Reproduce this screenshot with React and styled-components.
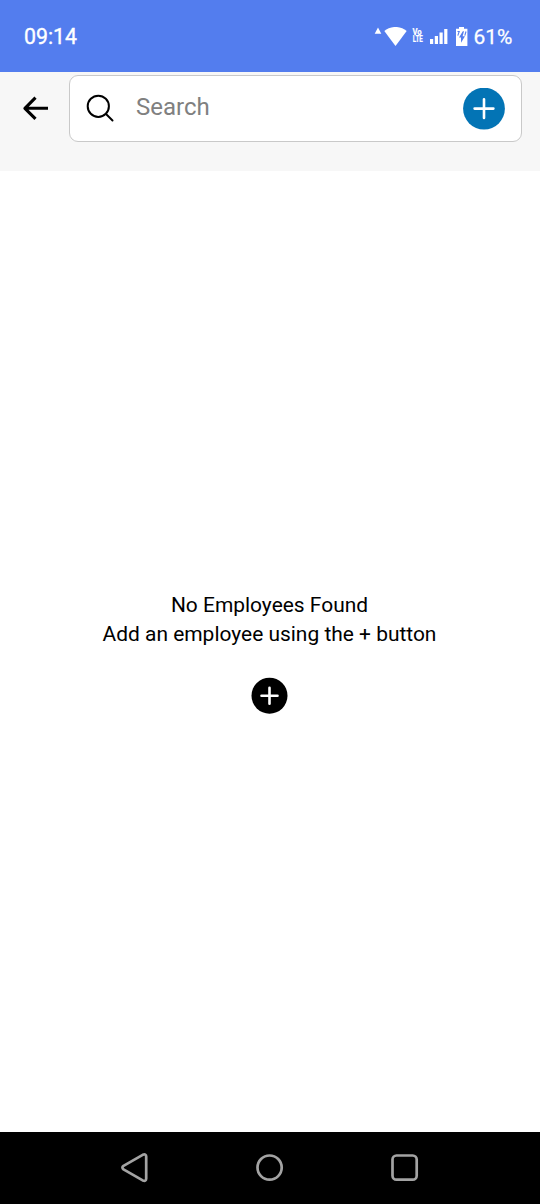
import React from "react";
import styled, { createGlobalStyle } from "styled-components";

const GlobalStyle = createGlobalStyle`
  * { box-sizing: border-box; }
  html, body { margin: 0; background: #fff; }
  body { font-family: Roboto, "Liberation Sans", sans-serif; }
  button { border: 0; padding: 0; background: none; font: inherit; color: inherit; }
  svg { display: block; flex: none; }
`;

const Screen = styled.div`
  width: 540px;
  height: 1204px;
  display: flex;
  flex-direction: column;
  overflow: hidden;
  background: #fff;
`;

const StatusBar = styled.header`
  flex: none;
  height: 72px;
  padding: 2px 27.5px 0 24px;
  display: flex;
  align-items: center;
  justify-content: space-between;
  background: #537dee;
  color: #fff;
`;

const StatusText = styled.span`
  font-size: ${(p) => p.$size || 21}px;
  line-height: 24px;
  font-weight: 400;
  -webkit-text-stroke: ${(p) => p.$stroke || 0}px currentColor;
`;

const StatusIcons = styled.div`
  display: flex;
  align-items: center;
`;

const Indicators = styled.div`
  display: flex;
  align-items: flex-start;
  height: 21px;
  margin-right: 5.5px;
`;

const Volte = styled.div`
  width: 11px;
  margin: 2px 7px 0 5px;
  display: flex;
  flex-direction: column;
  align-items: center;
  font-size: 8.4px;
  line-height: 7.5px;
  font-weight: 700;
  -webkit-text-stroke: 0.2px currentColor;
`;

const VolteLine = styled.span`
  transform: scaleX(${(p) => p.$scale});
`;

const Toolbar = styled.div`
  flex: none;
  height: 99px;
  padding: 3px 18px 0 22px;
  display: flex;
  align-items: flex-start;
  background: #f7f7f7;
`;

const BackButton = styled.button`
  width: 47px;
  height: 66px;
  display: flex;
  align-items: center;
`;

const SearchBox = styled.div`
  flex: 1;
  height: 67px;
  padding: 0 16px 0 16px;
  display: flex;
  align-items: center;
  border: 1.5px solid #c9c9c9;
  border-radius: 9px;
  background: #fff;
`;

const SearchLabel = styled.span`
  flex: 1;
  margin: -3px 0 0 21px;
  font-size: 24px;
  line-height: 28px;
  color: #808080;
`;

const AddButton = styled.button`
  display: block;
  color: ${(p) => p.$color};
`;

const Content = styled.main`
  flex: 1;
  display: flex;
  flex-direction: column;
  align-items: center;
  padding: 420px 1px 0 0;
`;

const Message = styled.p`
  margin: 0 0 28px;
  text-align: center;
  font-size: 20.95px;
  line-height: 29px;
  color: #000;
`;

const MessageLine = styled.span`
  display: block;
`;

const NavBar = styled.nav`
  flex: none;
  height: 72px;
  padding: 0 67px;
  display: grid;
  grid-template-columns: repeat(3, 1fr);
  background: #000;
  color: #a3a3a3;
`;

const NavButton = styled.button`
  display: flex;
  align-items: center;
  justify-content: center;
`;

const PlusDisc = ({ width, height, cx, cy, r, arm }) => (
  <svg width={width} height={height} viewBox={`0 0 ${width} ${height}`}>
    <circle cx={cx} cy={cy} r={r} fill="currentColor" />
    <path
      d={`M${cx} ${cy - arm}V${cy + arm}M${cx - arm} ${cy}H${cx + arm}`}
      fill="none"
      stroke="#fff"
      strokeWidth="2.6"
      strokeLinecap="round"
    />
  </svg>
);

const SignalIcons = () => (
  <Indicators>
    <svg width="33" height="20" viewBox="0 0 33 20" fill="currentColor">
      <path d="M4 .5L7.3 6.8H.7Z" />
      <path d="M10.3 4C16 -1.4 27 -1.4 32.7 4L21.5 19Z" />
    </svg>
    <Volte>
      <VolteLine $scale={0.92}>Vo</VolteLine>
      <VolteLine $scale={0.74}>LTE</VolteLine>
    </Volte>
    <svg width="18" height="20" viewBox="0 0 18 20" fill="currentColor">
      <path d="M0 12H3.2V17H0ZM4.8 9H8V17H4.8ZM9.5 5.5H12.7V17H9.5ZM14.2 2H17.4V17H14.2Z" />
    </svg>
    <svg width="20" height="20" viewBox="0 0 20 20">
      <path d="M8 1.8H11V0H16V1.8H19.4V19H8Z" fill="currentColor" />
      <path d="M9.5 4.5H11.2L9.8 8.6M18 4.5L16.8 8.6" fill="none" stroke="#537dee" strokeWidth="1.1" />
      <path d="M14.8 4.2L11 10.4H13V15.8L17 9.2H14.6L16 4.2Z" fill="#537dee" />
    </svg>
  </Indicators>
);

export default function App() {
  return (
    <>
      <GlobalStyle />
      <Screen>
        <StatusBar>
          <StatusText $size={21.3} $stroke={0.35}>09:14</StatusText>
          <StatusIcons>
            <SignalIcons />
            <StatusText $stroke={0.25}>61%</StatusText>
          </StatusIcons>
        </StatusBar>
        <Toolbar>
          <BackButton aria-label="Back">
            <svg width="27" height="26" viewBox="0 0 27 26" fill="none" stroke="currentColor" strokeWidth="3.1" strokeLinejoin="round">
              <path d="M26 13.3H3M13.5 2.7L2.9 13.3L13.5 23.9" />
            </svg>
          </BackButton>
          <SearchBox>
            <svg width="29" height="29" viewBox="0 0 29 29" fill="none" stroke="#000" strokeWidth="2" strokeLinecap="round">
              <circle cx="12.3" cy="12.3" r="10.6" />
              <path d="M20 20L26.5 26.5" />
            </svg>
            <SearchLabel>Search</SearchLabel>
            <AddButton $color="#0374b5" aria-label="Add employee">
              <PlusDisc width={42} height={42} cx={21} cy={20.6} r={20.9} arm={9.4} />
            </AddButton>
          </SearchBox>
        </Toolbar>
        <Content>
          <Message>
            <MessageLine>No Employees Found</MessageLine>
            <MessageLine>Add an employee using the + button</MessageLine>
          </Message>
          <AddButton $color="#000" aria-label="Add employee">
            <PlusDisc width={37} height={37} cx={18.5} cy={18.7} r={18} arm={8} />
          </AddButton>
        </Content>
        <NavBar>
          <NavButton aria-label="Back">
            <svg width="28" height="30" viewBox="0.5 0.4 28 30" fill="none" stroke="currentColor" strokeWidth="2.7" strokeLinejoin="round">
              <path d="M3 13.2L22.2 2.2Q25.7 .9 25.7 4V26Q25.7 29.1 22.2 27.8L3 16.8Q.8 15 3 13.2Z" />
            </svg>
          </NavButton>
          <NavButton aria-label="Home">
            <svg width="28" height="28" viewBox="0.4 0.4 28 28" fill="none" stroke="currentColor" strokeWidth="2.7">
              <circle cx="14" cy="14" r="12.1" />
            </svg>
          </NavButton>
          <NavButton aria-label="Recent apps">
            <svg width="28" height="28" viewBox="0.4 0.4 28 28" fill="none" stroke="currentColor" strokeWidth="2.7">
              <rect x="1.9" y="1.9" width="24.2" height="24.2" rx="4" />
            </svg>
          </NavButton>
        </NavBar>
      </Screen>
    </>
  );
}
